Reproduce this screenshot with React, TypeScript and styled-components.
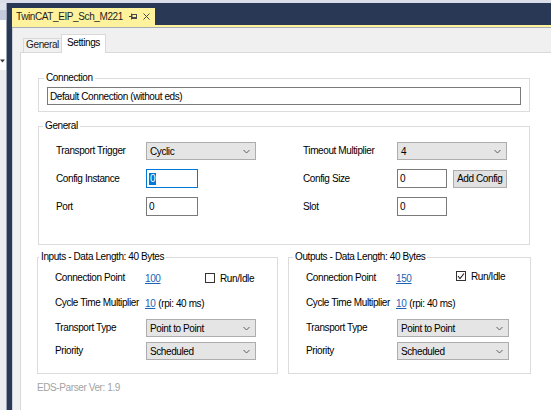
import styled, { createGlobalStyle } from 'styled-components';

const GlobalStyle = createGlobalStyle`
  html, body {
    margin: 0;
    padding: 0;
  }
  body {
    font-family: 'Liberation Sans', Arial, sans-serif;
    font-size: 10px;
    letter-spacing: -0.4px;
    color: #000;
    background: #293955;
  }
  * {
    box-sizing: border-box;
  }
`;

const Screen = styled.div`
  width: 551px;
  height: 410px;
  overflow: hidden;
  display: flex;
  flex-direction: column;
`;

const TopStrip = styled.div`
  height: 3px;
  flex: none;
  background: #d9dee9;
`;

const Body = styled.div`
  flex: 1;
  display: flex;
  min-height: 0;
`;

const SidePanel = styled.div`
  width: 7px;
  flex: none;
  display: flex;
  flex-direction: column;
  background: #ebecf0;
  border-right: 1px solid #9aa3b6;
`;

const SideSection = styled.div<{ $height: number; $bg: string }>`
  height: ${(p) => p.$height}px;
  flex: none;
  background: ${(p) => p.$bg};
  display: flex;
  align-items: flex-end;
  padding-bottom: 7px;
`;

const Gutter = styled.div`
  width: 5px;
  flex: none;
  background: #293955;
`;

const Document = styled.div`
  flex: 1;
  display: flex;
  flex-direction: column;
  background: #293955;
  min-width: 0;
`;

const DocTabRow = styled.div`
  height: 22px;
  flex: none;
  display: flex;
  align-items: flex-end;
`;

const DocTab = styled.div`
  width: 143px;
  height: 17px;
  background: #fff29d;
  display: flex;
  align-items: center;
  padding: 0 5px 0 4px;
  color: #1e1e1e;
  white-space: nowrap;
`;

const DocTitle = styled.span`
  flex: 1;
`;

const DocIcons = styled.div`
  display: flex;
  align-items: center;
  gap: 6px;
`;

const DocAccent = styled.div`
  height: 3px;
  flex: none;
  background: #fff29d;
  border-bottom: 1px solid #a9adb6;
`;

const ToolForm = styled.div`
  flex: 1;
  display: flex;
  flex-direction: column;
  background: #f0f0f0;
  border-left: 1px solid #cdd0d7;
  padding: 6px 0 0 7px;
  min-height: 0;
`;

const TabStrip = styled.div`
  height: 18px;
  flex: none;
  display: flex;
  align-items: flex-end;
  padding-left: 3px;
`;

const TabButton = styled.div<{ $active?: boolean }>`
  position: relative;
  z-index: ${(p) => (p.$active ? 1 : 0)};
  width: ${(p) => (p.$active ? 45 : 39)}px;
  height: ${(p) => (p.$active ? 19 : 14)}px;
  margin-left: ${(p) => (p.$active ? -1 : 0)}px;
  margin-bottom: ${(p) => (p.$active ? -1 : 0)}px;
  padding-top: ${(p) => (p.$active ? 2 : 0)}px;
  line-height: 12px;
  text-align: center;
  color: ${(p) => (p.$active ? '#000000' : '#222222')};
  background: ${(p) => (p.$active ? '#ffffff' : '#f0f0f0')};
  border: 1px solid #d9d9d9;
  border-bottom: none;
`;

const TabPage = styled.div`
  flex: 1;
  background: #ffffff;
  border-top: 1px solid #d9d9d9;
  border-left: 1px solid #d9d9d9;
  padding: 19px 0 0 17px;
`;

const GroupBox = styled.fieldset<{ $width: number; $top?: number }>`
  width: ${(p) => p.$width}px;
  margin: ${(p) => p.$top ?? 0}px 0 0 0;
  padding: 0;
  border: 1px solid #dcdcdc;
  min-width: 0;
`;

const GroupTitle = styled.legend<{ $inset?: number }>`
  margin-left: ${(p) => p.$inset ?? 4}px;
  padding: 0 2px;
  line-height: 12px;
`;

const ConnectionBody = styled.div`
  padding: 3px 8px 6px 8px;
`;

const TextBox = styled.div<{ $width?: number; $height?: number; $focused?: boolean }>`
  width: ${(p) => (p.$width ? `${p.$width}px` : '100%')};
  height: ${(p) => p.$height ?? 19}px;
  background: #ffffff;
  border: 1px solid ${(p) => (p.$focused ? '#0078d7' : '#7a7a7a')};
  padding-left: 2px;
  display: flex;
  align-items: center;
  white-space: nowrap;
`;

const Selection = styled.span`
  background: #0078d7;
  color: #ffffff;
  padding: 0 1px;
  line-height: 12px;
`;

const FormGrid = styled.div`
  display: grid;
  grid-template-columns: 90px 110px 47px 94px 110px;
  grid-template-rows: 18px 19px 19px;
  row-gap: 9px;
  align-items: center;
  padding: 10px 0 28px 17px;
`;

const Label = styled.span<{ $col?: number }>`
  grid-column: ${(p) => p.$col ?? 'auto'};
  line-height: 12px;
  white-space: nowrap;
`;

const Cell = styled.div<{ $col?: number }>`
  grid-column: ${(p) => p.$col ?? 'auto'};
  display: flex;
  gap: 6px;
  align-items: center;
`;

const Combo = styled.div<{ $width: number }>`
  width: ${(p) => p.$width}px;
  height: 18px;
  display: flex;
  align-items: center;
  justify-content: space-between;
  background: #e5e5e5;
  border: 1px solid #adadad;
  padding: 0 5px 0 3px;
  white-space: nowrap;
`;

const Button = styled.div`
  width: 55px;
  height: 18px;
  display: flex;
  align-items: center;
  justify-content: center;
  background: #e1e1e1;
  border: 1px solid #adadad;
  white-space: nowrap;
`;

const DataRow = styled.div`
  display: flex;
  gap: 10px;
  margin: 6px 0 0 -1px;
`;

const ParamBody = styled.div`
  display: flex;
  flex-direction: column;
  padding: 7px 0 13px 17px;
`;

const ParamRow = styled.div<{ $height: number; $space?: number }>`
  height: ${(p) => p.$height}px;
  margin-top: ${(p) => p.$space ?? 0}px;
  display: flex;
  align-items: center;
  white-space: nowrap;
`;

const ParamLabel = styled.span<{ $width: number }>`
  width: ${(p) => p.$width}px;
  flex: none;
  line-height: 12px;
`;

const ValueCell = styled.span`
  width: 60px;
  flex: none;
`;

const Link = styled.span`
  color: #1b63b7;
  text-decoration: underline;
`;

const Hint = styled.span`
  margin-left: 3px;
`;

const CheckLabel = styled.span<{ $lift?: number }>`
  display: flex;
  align-items: center;
  gap: 5px;
  margin-bottom: ${(p) => p.$lift ?? 0}px;
`;

const CheckBox = styled.span`
  width: 10px;
  height: 10px;
  border: 1px solid #333333;
  background: #ffffff;
  display: flex;
  align-items: center;
  justify-content: center;
`;

const Footer = styled.div`
  margin: 8px 0 0 -1px;
  line-height: 12px;
  color: #a3a3a3;
`;

function Chevron() {
  return (
    <svg width='7' height='5' viewBox='0 0 7 5'>
      <polyline points='0.5,1 3.5,4 6.5,1' fill='none' stroke='#5f5f5f' strokeWidth='1' />
    </svg>
  );
}

function PinIcon() {
  return (
    <svg width='8' height='7' viewBox='0 0 8 7'>
      <line x1='0' y1='3.5' x2='2.5' y2='3.5' stroke='#4b4b4b' strokeWidth='1' />
      <line x1='2.5' y1='0.5' x2='2.5' y2='6.5' stroke='#4b4b4b' strokeWidth='1' />
      <rect x='3' y='1.5' width='4.5' height='4' fill='none' stroke='#4b4b4b' strokeWidth='1' />
      <line x1='3' y1='4.5' x2='7.5' y2='4.5' stroke='#4b4b4b' strokeWidth='1' />
    </svg>
  );
}

function CloseIcon() {
  return (
    <svg width='7' height='7' viewBox='0 0 7 7'>
      <path d='M0.5 0.5 L6.5 6.5 M6.5 0.5 L0.5 6.5' stroke='#4b4b4b' strokeWidth='1' />
    </svg>
  );
}

function DropArrow() {
  return (
    <svg width='5' height='4' viewBox='0 0 5 4'>
      <polygon points='0,0.5 5,0.5 2.5,3.5' fill='#3a3a3a' />
    </svg>
  );
}

function CheckMark() {
  return (
    <svg width='8' height='8' viewBox='0 0 8 8'>
      <polyline points='1,4 3,6.5 7,1.5' fill='none' stroke='#222' strokeWidth='1.1' />
    </svg>
  );
}

interface ConnectionSide {
  title: string;
  point: string;
  runIdle: boolean;
  inset: number;
  width: number;
  labelWidth: number;
  comboWidth: number;
  checkLift: number;
}

const sides: ConnectionSide[] = [
  {
    title: 'Inputs - Data Length: 40 Bytes',
    point: '100',
    runIdle: false,
    inset: 1,
    width: 241,
    labelWidth: 90,
    comboWidth: 110,
    checkLift: 0,
  },
  {
    title: 'Outputs - Data Length: 40 Bytes',
    point: '150',
    runIdle: true,
    inset: 4,
    width: 243,
    labelWidth: 90,
    comboWidth: 112,
    checkLift: 4,
  },
];

function ConnectionGroup({ side }: { side: ConnectionSide }) {
  return (
    <GroupBox $width={side.width}>
      <GroupTitle $inset={side.inset}>{side.title}</GroupTitle>
      <ParamBody>
        <ParamRow $height={16}>
          <ParamLabel $width={side.labelWidth}>Connection Point</ParamLabel>
          <ValueCell>
            <Link>{side.point}</Link>
          </ValueCell>
          <CheckLabel $lift={side.checkLift}>
            <CheckBox>{side.runIdle && <CheckMark />}</CheckBox>
            Run/Idle
          </CheckLabel>
        </ParamRow>
        <ParamRow $height={16} $space={9}>
          <ParamLabel $width={side.labelWidth}>Cycle Time Multiplier</ParamLabel>
          <Link>10</Link>
          <Hint>(rpi: 40 ms)</Hint>
        </ParamRow>
        <ParamRow $height={18} $space={8}>
          <ParamLabel $width={side.labelWidth + 1}>Transport Type</ParamLabel>
          <Combo $width={side.comboWidth}>
            Point to Point
            <Chevron />
          </Combo>
        </ParamRow>
        <ParamRow $height={18} $space={5}>
          <ParamLabel $width={side.labelWidth + 1}>Priority</ParamLabel>
          <Combo $width={side.comboWidth}>
            Scheduled
            <Chevron />
          </Combo>
        </ParamRow>
      </ParamBody>
    </GroupBox>
  );
}

export default function App() {
  return (
    <>
      <GlobalStyle />
      <Screen>
        <TopStrip />
        <Body>
          <SidePanel>
            <SideSection $height={5} $bg='#dfe3ec' />
            <SideSection $height={10} $bg='#c3cadb' />
            <SideSection $height={50} $bg='#ffffff'>
              <DropArrow />
            </SideSection>
          </SidePanel>
          <Gutter />
          <Document>
            <DocTabRow>
              <DocTab>
                <DocTitle>TwinCAT_EIP_Sch_M221</DocTitle>
                <DocIcons>
                  <PinIcon />
                  <CloseIcon />
                </DocIcons>
              </DocTab>
            </DocTabRow>
            <DocAccent />
            <ToolForm>
              <TabStrip>
                <TabButton>General</TabButton>
                <TabButton $active>Settings</TabButton>
              </TabStrip>
              <TabPage>
                <GroupBox $width={492}>
                  <GroupTitle $inset={5}>Connection</GroupTitle>
                  <ConnectionBody>
                    <TextBox $height={18}>Default Connection (without eds)</TextBox>
                  </ConnectionBody>
                </GroupBox>

                <GroupBox $width={492} $top={8}>
                  <GroupTitle>General</GroupTitle>
                  <FormGrid>
                    <Label>Transport Trigger</Label>
                    <Combo $width={110}>
                      Cyclic
                      <Chevron />
                    </Combo>
                    <Label $col={4}>Timeout Multiplier</Label>
                    <Combo $width={110}>
                      4
                      <Chevron />
                    </Combo>

                    <Label>Config Instance</Label>
                    <Cell>
                      <TextBox $width={52} $focused>
                        <Selection>0</Selection>
                      </TextBox>
                    </Cell>
                    <Label $col={4}>Config Size</Label>
                    <Cell>
                      <TextBox $width={50}>0</TextBox>
                      <Button>Add Config</Button>
                    </Cell>

                    <Label>Port</Label>
                    <Cell>
                      <TextBox $width={52}>0</TextBox>
                    </Cell>
                    <Label $col={4}>Slot</Label>
                    <Cell>
                      <TextBox $width={50}>0</TextBox>
                    </Cell>
                  </FormGrid>
                </GroupBox>

                <DataRow>
                  {sides.map((side) => (
                    <ConnectionGroup key={side.title} side={side} />
                  ))}
                </DataRow>

                <Footer>EDS-Parser Ver: 1.9</Footer>
              </TabPage>
            </ToolForm>
          </Document>
        </Body>
      </Screen>
    </>
  );
}
